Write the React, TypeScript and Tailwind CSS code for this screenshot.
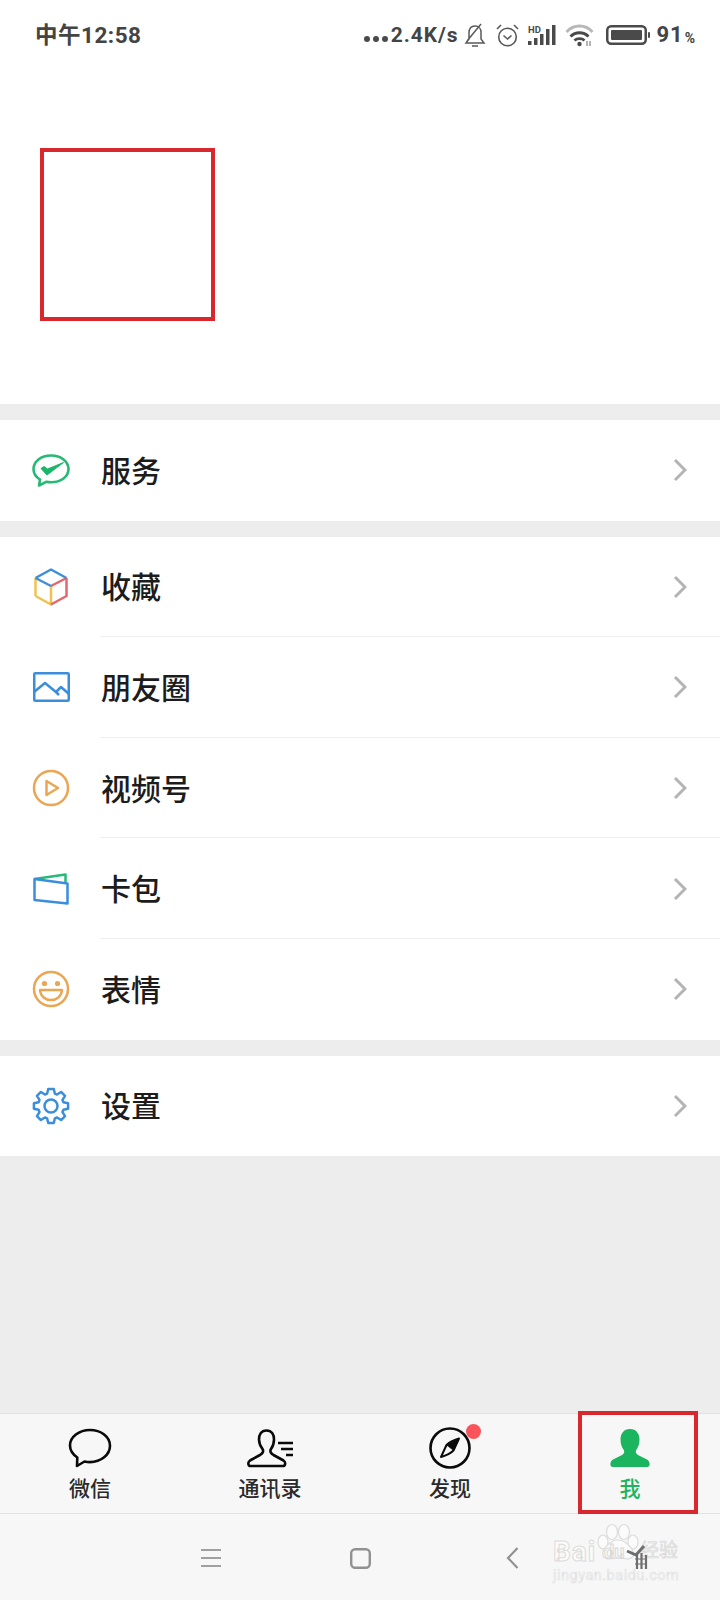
import type { ReactNode } from 'react';

const font = { fontFamily: '"Roboto", "Noto Sans CJK SC", "Noto Sans", sans-serif' };

function Chevron() {
  return (
    <svg width="14" height="24" viewBox="0 0 14 24" fill="none" stroke="#b4b4b4" strokeWidth="3" className="shrink-0">
      <path d="M2 2 L12 12 L2 22" />
    </svg>
  );
}

function Row({ icon, label, sep }: { icon: ReactNode; label: string; sep?: boolean }) {
  return (
    <div className="relative flex h-[100.6px] items-center bg-white pl-[32px] pr-[33px]">
      <div className="flex w-[38px] shrink-0 items-center justify-center">{icon}</div>
      <div className="ml-[31px] flex-1 pt-[3px] text-[30px] font-medium leading-none text-[#1c1c1c]">{label}</div>
      <Chevron />
      {sep && <div className="absolute bottom-0 left-[100px] right-0 h-px bg-[#eeeeee]" />}
    </div>
  );
}

function Tab({ icon, label, active }: { icon: ReactNode; label: string; active?: boolean }) {
  return (
    <div className="flex w-[180px] flex-col items-center">
      <div className="flex h-[44px] items-center justify-center">{icon}</div>
      <div className={`mt-[7px] text-[21px] font-medium leading-[24px] ${active ? 'text-[#1bb45f]' : 'text-[#2a2a2a]'}`}>{label}</div>
    </div>
  );
}

// 8 toothed cog outline
function gearPath() {
  const pts: string[] = [];
  for (let i = 0; i < 8; i++) {
    const a = (i * Math.PI) / 4 - Math.PI / 2;
    const p = (r: number, d: number) => `${(19 + r * Math.cos(a + d)).toFixed(2)} ${(19 + r * Math.sin(a + d)).toFixed(2)}`;
    pts.push(p(13, -0.3), p(17.3, -0.16), p(17.3, 0.16), p(13, 0.3));
  }
  return `M${pts.join(' L')} Z`;
}

const ServiceIcon = (
  <svg width="38" height="33" viewBox="0 0 38 33" fill="none">
    <path d="M19 1.500C9 1.500 1.500 7.500 1.500 15c0 4.500 2.600 8.200 6.600 10.600L7 31.500l7.200-3.700c1.500.3 3.100.5 4.800.5 10 0 17.500-5.800 17.500-13.300S29 1.500 19 1.500z" stroke="#25b973" strokeWidth="2.600" strokeLinejoin="round" />
    <path d="M9 14.500L12 12.500L15.500 15L31.500 8.500L15 21Z" fill="#1db56a" stroke="#1db56a" strokeWidth="1" strokeLinejoin="round" />
  </svg>
);

const CubeIcon = (
  <svg width="34" height="38" viewBox="0 0 34 38" fill="none" strokeWidth="2.500" strokeLinejoin="round">
    <path d="M1.500 28 V10 M1.500 28 L17 36.500 V18" stroke="#f2c14e" />
    <path d="M32.500 10 V28 L17 36.500 M32.500 10 L17 18" stroke="#e2686e" />
    <path d="M1.500 10 L17 1.500 L32.500 10 M1.500 10 L17 18" stroke="#3f8fd8" />
  </svg>
);

const PhotoIcon = (
  <svg width="37" height="30" viewBox="0 0 37 30" fill="none" stroke="#3a8edb" strokeWidth="2.500" strokeLinejoin="round">
    <rect x="1.250" y="1.250" width="34.500" height="27.500" rx="1" />
    <path d="M1 20 L12 11 L23 20 L28 15 L36 22" />
    <path d="M23 20 L26 23" />
  </svg>
);

const PlayIcon = (
  <svg width="38" height="38" viewBox="0 0 38 38" fill="none" stroke="#eaa653" strokeWidth="2.500">
    <circle cx="19" cy="19" r="17" />
    <path d="M14.500 12 L26 19 L14.500 26 Z" strokeLinejoin="round" />
  </svg>
);

const CardIcon = (
  <svg width="36" height="32" viewBox="0 0 36 32" fill="none" strokeWidth="2.500" strokeLinejoin="round">
    <path d="M1.500 6 L32.500 1.500 V9" stroke="#25b97a" />
    <path d="M1.500 6 L34.500 10.500 V30.500 L1.500 27 Z" stroke="#3a8edb" />
  </svg>
);

const SmileIcon = (
  <svg width="38" height="38" viewBox="0 0 38 38" fill="none" stroke="#eaa653" strokeWidth="2.500">
    <circle cx="19" cy="19" r="17" />
    <circle cx="12.500" cy="13.500" r="2.600" fill="#eaa653" stroke="none" />
    <circle cx="25.500" cy="13.500" r="2.600" fill="#eaa653" stroke="none" />
    <path d="M8 20 H30 C29.500 26.500 24.500 30 19 30 S8.500 26.500 8 20 Z" strokeLinejoin="round" />
  </svg>
);

const GearIcon = (
  <svg width="38" height="38" viewBox="0 0 38 38" fill="none" stroke="#3a8edb" strokeWidth="2.500" strokeLinejoin="round">
    <circle cx="19" cy="19" r="6.500" />
    <path d={gearPath()} />
  </svg>
);

const ChatIcon = (
  <svg width="44" height="40" viewBox="0 0 44 40" fill="none" stroke="#0a0a0a" strokeWidth="2.600">
    <path d="M22 2C11 2 2 9 2 17.500c0 5 3 9 7.300 12L9 38l7.500-4.500c1.800.4 3.600.6 5.500.6 11 0 20-7.200 20-16.300S33 2 22 2z" strokeLinejoin="round" />
  </svg>
);

const ContactsIcon = (
  <svg width="47" height="40" viewBox="0 0 47 40" fill="none" stroke="#0a0a0a" strokeWidth="2.600" strokeLinejoin="round">
    <path d="M19.500 2.500C14 2.500 12 7 12 11.500C12 16 14 19 15.500 21C17 23.500 15.500 25.500 13 27L3 32.500C.5 34 1 38 3.500 38H36C38.500 38 39 34 36.500 32.500L26.500 27C24 25.500 22.500 23.500 24 21C25.500 19 27 16 27 11.500C27 7 25 2.500 19.500 2.500Z" />
    <path d="M31 15H46M34 21H46M39 27H46" />
  </svg>
);

const CompassIcon = (
  <svg width="42" height="42" viewBox="0 0 42 42" fill="none" stroke="#0a0a0a" strokeWidth="2.600">
    <circle cx="21" cy="21" r="19.500" />
    <path d="M30 11.500L24.500 23.500C22 26 17 28.500 12 30L17.500 18C20 15.500 25 13 30 11.500Z" strokeLinejoin="round" strokeWidth="2" />
    <path d="M30 11.500L24.500 23.500L17.500 18Z" fill="#0a0a0a" strokeWidth="0.500" />
  </svg>
);

const MeIcon = (
  <svg width="40" height="38" viewBox="0 0 40 38" fill="#1bb45f">
    <path d="M20 0C13.500 0 10.500 5 10.500 10.500C10.500 15 12 18.500 13.500 20.500C15 23 14 25 12 26L3 30.500C0 32 -1 38 3 38H37C41 38 40 32 37 30.500L28 26C26 25 25 23 26.500 20.500C28 18.500 29.500 15 29.500 10.500C29.500 5 26.500 0 20 0Z" />
  </svg>
);

export default function App() {
  return (
    <div className="flex h-[1600px] w-[720px] flex-col overflow-hidden bg-[#ededed]" style={font}>
      <div className="relative h-[404px] bg-white">
        <div className="flex h-[70px] items-center justify-between pl-[35px] pr-[25px] font-bold text-[#444444]">
          <div className="text-[22.500px] leading-none tracking-[0.5px]">中午12:58</div>
          <div className="flex items-center">
            <div className="mt-[8px] flex gap-[3px]">
              <div className="h-[6px] w-[6px] rounded-full bg-[#4a4a4a]" />
              <div className="h-[6px] w-[6px] rounded-full bg-[#4a4a4a]" />
              <div className="h-[6px] w-[6px] rounded-full bg-[#4a4a4a]" />
            </div>
            <span className="ml-[3px] text-[21px] leading-none tracking-[0.900px]">2.4K/s</span>
            <svg className="ml-[6px]" width="22" height="24" viewBox="0 0 22 24" fill="none" stroke="#5a5a5a" strokeWidth="1.500">
              <path d="M11 3C7 3 5 6 5 10V16L2 20H20L17 16V9C17 6 15 3 11 3ZM8 23H14M3 18L17 1" />
            </svg>
            <svg className="ml-[10px]" width="23" height="24" viewBox="0 0 23 24" fill="none" stroke="#5a5a5a" strokeWidth="1.600">
              <circle cx="11.500" cy="14" r="8.800" />
              <path d="M7.500 12.500L11.500 16L15.500 12.500M1 6L5 2M22 6L18 2" />
            </svg>
            <svg className="ml-[9px]" width="28" height="22" viewBox="0 0 28 22" fill="#4a4a4a">
              <rect x="0" y="17" width="3.500" height="4" />
              <rect x="6" y="14" width="3.500" height="7" />
              <rect x="12" y="10" width="3.500" height="11" />
              <rect x="18" y="5" width="3.500" height="16" />
              <rect x="24" y="1" width="3.500" height="20" />
              <text x="0" y="9" fontSize="9.500" fontWeight="700" fontFamily="Roboto, sans-serif">HD</text>
            </svg>
            <svg className="ml-[9px]" width="29" height="24" viewBox="0 0 29 24" fill="none" strokeWidth="2.800">
              <path d="M1.500 9C8.500 1 20.500 1 27.500 9" stroke="#b8b8b8" />
              <path d="M5.500 13.500C10.500 8.500 18.500 8.500 23.500 13.500" stroke="#4a4a4a" />
              <path d="M9.500 17.500C12 15 17 15 19.500 17.500" stroke="#4a4a4a" />
              <circle cx="14.500" cy="21" r="2.200" fill="#4a4a4a" stroke="none" />
              <path d="M22 18V23M25 18V23" stroke="#6a6a6a" strokeWidth="1" />
            </svg>
            <svg className="ml-[12px]" width="44" height="20" viewBox="0 0 44 20" fill="none">
              <rect x="1.250" y="1.250" width="38.500" height="17.500" rx="4" stroke="#4a4a4a" strokeWidth="2.500" />
              <rect x="5" y="5" width="31" height="10" rx="1" fill="#4a4a4a" />
              <rect x="42" y="7" width="2" height="6" rx="1" fill="#4a4a4a" />
            </svg>
            <span className="ml-[6px] text-[22px] leading-none tracking-[1px]">91</span>
            <span className="ml-[1px] mt-[5px] text-[14px] font-bold leading-none">%</span>
          </div>
        </div>
        <div className="absolute left-[39.500px] top-[148px] h-[173px] w-[175px] border-4 border-[#d9272e]" />
      </div>

      <div className="mt-[16px]">
        <Row icon={ServiceIcon} label="服务" />
      </div>
      <div className="mt-[16px]">
        <Row icon={CubeIcon} label="收藏" sep />
        <Row icon={PhotoIcon} label="朋友圈" sep />
        <Row icon={PlayIcon} label="视频号" sep />
        <Row icon={CardIcon} label="卡包" sep />
        <Row icon={SmileIcon} label="表情" />
      </div>
      <div className="mt-[16px]">
        <Row icon={GearIcon} label="设置" />
      </div>

      <div className="flex-1" />

      <div className="relative flex h-[101px] items-start border-y border-[#e2e2e2] bg-[#f7f7f7] pt-[12px]">
        <Tab icon={ChatIcon} label="微信" />
        <Tab icon={ContactsIcon} label="通讯录" />
        <div className="relative">
          <Tab icon={CompassIcon} label="发现" />
          <div className="absolute left-[106px] top-[-2px] h-[15px] w-[15px] rounded-full bg-[#f9545a]" />
        </div>
        <Tab icon={MeIcon} label="我" active />
        <div className="absolute left-[578px] top-[-3px] bottom-[-1px] w-[120px] border-4 border-[#d9272e]" />
      </div>

      <div className="relative flex h-[86px] items-center bg-[#f7f7f7] pl-[201px] pt-[2px]">
        <svg width="20" height="20" viewBox="0 0 20 20" stroke="#a0a0a0" strokeWidth="2">
          <path d="M0 2h20M0 10h20M0 18h20" />
        </svg>
        <svg className="ml-[129px]" width="21" height="21" viewBox="0 0 21 21" fill="none" stroke="#919191" strokeWidth="2.400">
          <rect x="1.200" y="1.200" width="18.600" height="18.600" rx="4" />
        </svg>
        <svg className="ml-[135px]" width="13" height="22" viewBox="0 0 13 22" fill="none" stroke="#919191" strokeWidth="2.200">
          <path d="M11.500 1L2 11L11.500 21" />
        </svg>

        {/* watermark sits on top of the nav bar */}
        <svg className="absolute left-[595px] top-[9px]" width="46" height="40" viewBox="0 0 46 40" fill="#fbfbfb" stroke="#dcdcdc" strokeWidth="1.200">
          <ellipse cx="8" cy="19" rx="5" ry="7" />
          <ellipse cx="17" cy="9" rx="5.500" ry="7.500" />
          <ellipse cx="29" cy="9" rx="5.500" ry="7.500" />
          <ellipse cx="38" cy="19" rx="5" ry="7" />
          <path d="M23 17C16 17 6 26 8 33C10 38 18 35 23 35C28 35 36 38 38 33C40 26 30 17 23 17Z" />
        </svg>
        <div className="absolute left-[553px] top-[24px] text-[28px] font-bold leading-none tracking-[1px] text-[#fbfbfb] [-webkit-text-stroke:1px_#dcdcdc]">Bai</div>
        <div className="absolute left-[604px] top-[29px] text-[18px] font-bold leading-none text-[#fbfbfb] [-webkit-text-stroke:1px_#d8d8d8]">du</div>
        <div className="absolute left-[640px] top-[27px] text-[19px] leading-none text-[#ececec] [-webkit-text-stroke:0.600px_#d8d8d8]">经验</div>
        <div className="absolute left-[553px] top-[55px] text-[14.500px] leading-none tracking-[0.500px] text-[#f7f7f7] [-webkit-text-stroke:0.600px_#e2e2e2]">jingyan.baidu.com</div>
        <svg className="absolute left-[626px] top-[30px]" width="22" height="26" viewBox="0 0 22 26" fill="none" stroke="#6e6e6e" strokeWidth="2.200">
          <path d="M1 7L10 11L18 2" strokeWidth="3" />
          <path d="M11 11V25M15.500 9V25M20 11V25" />
          <path d="M9 15H21M9 20H21" strokeWidth="1.200" />
        </svg>
      </div>
    </div>
  );
}
